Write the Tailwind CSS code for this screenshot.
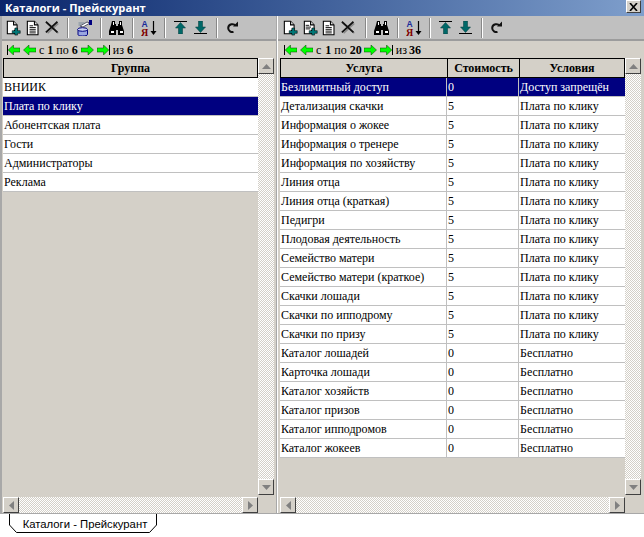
<!DOCTYPE html>
<html>
<head>
    <meta charset="utf-8">
    <title>Каталоги - Прейскурант</title>
    <script src="https://cdn.jsdelivr.net/npm/@tailwindcss/browser@4"></script>
</head>
<body class="w-[644px] h-[537px] overflow-hidden bg-white font-['Liberation_Serif',serif] text-[12px] text-black">

    <!-- icons -->
    <svg class="hidden">
        <symbol id="i-new" viewBox="0 -1 18 18">
            <path d="M1.500.5h7l4 4v6h-3v4h-8z" fill="#fff" stroke="#000" stroke-width="1.200"/>
            <path d="M8.500.5v4h4" fill="#ddd" stroke="#000" stroke-width="1.200"/>
            <path d="M10 8h3v3h3v3h-3v2h-3v-2H7v-3h3z" fill="#007878" stroke="#000" stroke-width=".6"/>
        </symbol>
        <symbol id="i-copy" viewBox="0 -1 18 18">
            <path d="M1.500.5h7l4 4v6h-3v4h-8z" fill="#fff" stroke="#000" stroke-width="1.200"/>
            <path d="M8.500.5v4h4" fill="#ddd" stroke="#000" stroke-width="1.200"/>
            <path d="M3 5h4M3 7h6M3 9h5" stroke="#000"/>
            <path d="M10 8h3v3h3v3h-3v2h-3v-2H7v-3h3z" fill="#007878" stroke="#000" stroke-width=".6"/>
        </symbol>
        <symbol id="i-doc" viewBox="0 -1 18 18">
            <path d="M1.500.5h8l4 4v11h-12z" fill="#fff" stroke="#000" stroke-width="1.200"/>
            <path d="M9.500.5v4h4" fill="#ddd" stroke="#000" stroke-width="1.200"/>
            <path d="M4 5.500h4M4 7.500h7M4 9.500h7M4 11.500h7M4 13.500h7" stroke="#000"/>
        </symbol>
        <symbol id="i-del" viewBox="0 -1 18 18">
            <path d="M3 3l12 11M15 3L3 14" stroke="#888" stroke-width="1.600" fill="none"/>
            <path d="M1 1l13 12M14 1L1 13" stroke="#111" stroke-width="2" fill="none"/>
        </symbol>
        <symbol id="i-cat" viewBox="0 0 16 16">
            <path d="M1 10v4.500c0 1 2 1.500 4.500 1.500s5-.5 5-1.500V10" fill="#9aa6e0" stroke="#000080"/>
            <ellipse cx="5.500" cy="9.500" rx="5" ry="1.800" fill="#c8d0f0" stroke="#000080"/>
            <path d="M3 6l7-4 3 1-7 4z" fill="#fff" stroke="#556"/>
            <path d="M1.500 3h6M1.500 5h3" stroke="#789" fill="none"/>
            <path d="M12 0h3v5h-3z" fill="#000080"/>
        </symbol>
        <symbol id="i-find" viewBox="0 0 16 16">
            <path d="M3 1h3v3h1v2h2V4h1V1h3v4l2 6v4h-6v-5H7v5H0v-4l2-6z" fill="#000"/>
            <path d="M2 11h3v2H2zM11 11h3v2h-3zM4 2h1v3H4zM11 2h1v3h-1z" fill="#fff"/>
        </symbol>
        <symbol id="i-sort" viewBox="0 0 16 16">
            <text x="0.500" y="7" font-family="Liberation Sans, sans-serif" font-size="8.500" font-weight="700" fill="#1a2a9a">A</text>
            <text x="0" y="15.500" font-family="Liberation Serif, serif" font-size="10" font-weight="700" fill="#800000">Я</text>
            <path d="M12.500 1v12" stroke="#000" stroke-width="1.200"/>
            <path d="M9.500 11h6l-3 4z" fill="#000"/>
        </symbol>
        <symbol id="i-up" viewBox="0 0 13 13">
            <path d="M0 .5h13" stroke="#000"/>
            <path d="M6.500 1.500L11.500 7H8.500V13H4.500V7H1.500z" fill="#006868" stroke="#003838" stroke-width=".5"/>
        </symbol>
        <symbol id="i-down" viewBox="0 0 13 13">
            <path d="M0 12.500h13" stroke="#000"/>
            <path d="M6.500 11.500L11.500 6H8.500V0H4.500V6H1.500z" fill="#006868" stroke="#003838" stroke-width=".5"/>
        </symbol>
        <symbol id="i-redo" viewBox="0 0 13 13">
            <path d="M9.500 4.500C8 2.500 2.500 2.500 2.200 7c0 3 3 4.500 5.300 4" fill="none" stroke="#111" stroke-width="2"/>
            <path d="M7 5.500h5V.5z" fill="#111"/>
        </symbol>
        <symbol id="i-first" viewBox="0 0 13 10">
            <path d="M1.200 5L6.500 0V3h6.500v4H6.500v3z" fill="#00ff00" stroke="#004000" stroke-width=".5"/>
            <path d="M.5 0v10" stroke="#000"/>
        </symbol>
        <symbol id="i-prev" viewBox="0 0 13 10">
            <path d="M.5 5L6 0V3h7v4H6v3z" fill="#00ff00" stroke="#004000" stroke-width=".5"/>
        </symbol>
        <symbol id="i-next" viewBox="0 0 13 10">
            <path d="M12.500 5L7 0V3H0v4h7v3z" fill="#00ff00" stroke="#004000" stroke-width=".5"/>
        </symbol>
        <symbol id="i-last" viewBox="0 0 13 10">
            <path d="M11.800 5L6.500 0V3H0v4h6.500v3z" fill="#00ff00" stroke="#004000" stroke-width=".5"/>
            <path d="M12.500 0v10" stroke="#000"/>
        </symbol>
        <symbol id="i-sup" viewBox="0 0 9 5"><path d="M4.500 0L9 5H0z" fill="#808080"/></symbol>
        <symbol id="i-sdn" viewBox="0 0 9 5"><path d="M4.500 5L9 0H0z" fill="#808080"/></symbol>
        <symbol id="i-slt" viewBox="0 0 5 9"><path d="M0 4.500L5 0v9z" fill="#808080"/></symbol>
        <symbol id="i-srt" viewBox="0 0 5 9"><path d="M5 4.500L0 0v9z" fill="#808080"/></symbol>
    </svg>

    <!-- title bar -->
    <div class="h-4 flex items-center justify-between pl-[5px] pr-[3px] bg-gradient-to-r from-[#0a246a] to-[#7f9fcc]">
        <span class="font-['Open_Sans',sans-serif] font-bold text-[11.2px] leading-4 text-white">Каталоги - Прейскурант</span>
        <span class="w-[15px] h-[13px] -mt-[3px] flex items-center justify-center bg-[#d4d0c8] border border-[#fff] border-r-[#404040] border-b-[#404040]">
            <svg class="w-[9px] h-[8px]" viewBox="0 0 9 8"><path d="M1 0l7 8M8 0L1 8" stroke="#000" stroke-width="1.600" fill="none"/></svg>
        </span>
    </div>

    <!-- panes -->
    <div class="flex h-[497px] bg-[#d4d0c8]">

        <!-- left pane -->
        <div class="w-[276px] flex flex-col border-l-2 border-[#a8a8a8]">
            <div class="h-[25px] flex items-center pl-[4px] bg-[#c0c0c0] border-b-2 border-[#9c9c9c]">
                <svg class="w-4 h-4 mr-[4px]"><use href="#i-new"/></svg>
                <svg class="w-4 h-4 mr-[3px]"><use href="#i-doc"/></svg>
                <svg class="w-4 h-4 mr-[6px]"><use href="#i-del"/></svg>
                <div class="w-[2px] h-5 mr-[8px] border-l border-[#888] border-r border-r-white"></div>
                <svg class="w-4 h-4 mr-[7px]"><use href="#i-cat"/></svg>
                <div class="w-[2px] h-5 mr-[7px] border-l border-[#888] border-r border-r-white"></div>
                <svg class="w-4 h-4 mr-[7px]"><use href="#i-find"/></svg>
                <div class="w-[2px] h-5 mr-[7px] border-l border-[#888] border-r border-r-white"></div>
                <svg class="w-4 h-4 mr-[7px]"><use href="#i-sort"/></svg>
                <div class="w-[2px] h-5 mr-[8px] border-l border-[#888] border-r border-r-white"></div>
                <svg class="w-[13px] h-[13px] mr-[7px]"><use href="#i-up"/></svg>
                <svg class="w-[13px] h-[13px] mr-[9px]"><use href="#i-down"/></svg>
                <div class="w-[2px] h-5 mr-[8px] border-l border-[#888] border-r border-r-white"></div>
                <svg class="w-[13px] h-[13px]"><use href="#i-redo"/></svg>
            </div>
            <div class="h-[17px] flex items-center pl-[5px]">
                <svg class="w-[13px] h-[10px] mr-[3px]"><use href="#i-first"/></svg>
                <svg class="w-[13px] h-[10px] mr-[3px]"><use href="#i-prev"/></svg>
                <span class="mr-[3px]">с</span><b class="mr-[3px]">1</b><span class="mr-[3px]">по</span><b class="mr-[3px]">6</b>
                <svg class="w-[13px] h-[10px] mr-[3px]"><use href="#i-next"/></svg>
                <svg class="w-[13px] h-[10px] mr-[3px]"><use href="#i-last"/></svg>
                <span class="mr-[3px]">из</span><b>6</b>
            </div>
            <div class="flex-1 flex min-h-0 pl-px">
                <div class="w-[255px] flex flex-col">
                    <div class="flex-1 min-h-0">
                        <div class="h-5 flex items-center justify-center bg-[#d4d0c8] border border-black font-bold">Группа</div>
                        <div id="leftRows"></div>
                    </div>
                    <div class="h-4 flex bg-[conic-gradient(#d4d0c8_25%,#fff_0_50%,#d4d0c8_0_75%,#fff_0)] bg-[length:2px_2px] justify-between">
                        <span class="w-[16px] h-4 flex items-center justify-center bg-[#d4d0c8] border border-[#fff] border-r-[#404040] border-b-[#404040]"><svg class="w-[5px] h-[9px]"><use href="#i-slt"/></svg></span>
                        <span class="w-[16px] h-4 flex items-center justify-center bg-[#d4d0c8] border border-[#fff] border-r-[#404040] border-b-[#404040]"><svg class="w-[5px] h-[9px]"><use href="#i-srt"/></svg></span>
                    </div>
                </div>
                <div class="w-[16px] h-[437px] flex flex-col justify-between bg-[conic-gradient(#d4d0c8_25%,#fff_0_50%,#d4d0c8_0_75%,#fff_0)] bg-[length:2px_2px]">
                    <span class="h-[16px] flex items-center justify-center bg-[#d4d0c8] border border-[#fff] border-r-[#404040] border-b-[#404040]"><svg class="w-[9px] h-[5px]"><use href="#i-sup"/></svg></span>
                    <span class="h-[16px] flex items-center justify-center bg-[#d4d0c8] border border-[#fff] border-r-[#404040] border-b-[#404040]"><svg class="w-[9px] h-[5px]"><use href="#i-sdn"/></svg></span>
                </div>
            </div>
        </div>

        <div class="w-[2px] bg-[#a8a8a8] border-r border-white"></div>

        <!-- right pane -->
        <div class="flex-1 flex flex-col">
            <div class="h-[25px] flex items-center pl-[5px] bg-[#c0c0c0] border-b-2 border-[#9c9c9c]">
                <svg class="w-4 h-4 mr-[4px]"><use href="#i-new"/></svg>
                <svg class="w-4 h-4 mr-[3px]"><use href="#i-copy"/></svg>
                <svg class="w-4 h-4 mr-[3px]"><use href="#i-doc"/></svg>
                <svg class="w-4 h-4 mr-[8px]"><use href="#i-del"/></svg>
                <div class="w-[2px] h-5 mr-[7px] border-l border-[#888] border-r border-r-white"></div>
                <svg class="w-4 h-4 mr-[7px]"><use href="#i-find"/></svg>
                <div class="w-[2px] h-5 mr-[7px] border-l border-[#888] border-r border-r-white"></div>
                <svg class="w-4 h-4 mr-[7px]"><use href="#i-sort"/></svg>
                <div class="w-[2px] h-5 mr-[8px] border-l border-[#888] border-r border-r-white"></div>
                <svg class="w-[13px] h-[13px] mr-[7px]"><use href="#i-up"/></svg>
                <svg class="w-[13px] h-[13px] mr-[9px]"><use href="#i-down"/></svg>
                <div class="w-[2px] h-5 mr-[7px] border-l border-[#888] border-r border-r-white"></div>
                <svg class="w-[13px] h-[13px]"><use href="#i-redo"/></svg>
            </div>
            <div class="h-[17px] flex items-center pl-[6px]">
                <svg class="w-[13px] h-[10px] mr-[3px]"><use href="#i-first"/></svg>
                <svg class="w-[13px] h-[10px] mr-[3px]"><use href="#i-prev"/></svg>
                <span class="mr-[4px]">с</span><b class="mr-[3px]">1</b><span class="mr-[3px]">по</span><b class="mr-[2px]">20</b>
                <svg class="w-[13px] h-[10px] mr-[3px]"><use href="#i-next"/></svg>
                <svg class="w-[13px] h-[10px] mr-[3px]"><use href="#i-last"/></svg>
                <span class="mr-[2px]">из</span><b>36</b>
            </div>
            <div class="flex-1 flex min-h-0 pl-[2px]">
                <div class="w-[345px] flex flex-col">
                    <div class="flex-1 min-h-0">
                        <div class="h-5 grid grid-cols-[167px_72px_1fr] bg-[#d4d0c8] border border-black font-bold text-center">
                            <div class="border-r border-black leading-[18px]">Услуга</div>
                            <div class="border-r border-black leading-[18px]">Стоимость</div>
                            <div class="leading-[18px]">Условия</div>
                        </div>
                        <div id="rightRows"></div>
                    </div>
                    <div class="h-4 flex bg-[conic-gradient(#d4d0c8_25%,#fff_0_50%,#d4d0c8_0_75%,#fff_0)] bg-[length:2px_2px] justify-between">
                        <span class="w-[16px] h-4 flex items-center justify-center bg-[#d4d0c8] border border-[#fff] border-r-[#404040] border-b-[#404040]"><svg class="w-[5px] h-[9px]"><use href="#i-slt"/></svg></span>
                        <span class="w-[16px] h-4 flex items-center justify-center bg-[#d4d0c8] border border-[#fff] border-r-[#404040] border-b-[#404040]"><svg class="w-[5px] h-[9px]"><use href="#i-srt"/></svg></span>
                    </div>
                </div>
                <div class="w-[16px] h-[437px] flex flex-col justify-between bg-[conic-gradient(#d4d0c8_25%,#fff_0_50%,#d4d0c8_0_75%,#fff_0)] bg-[length:2px_2px]">
                    <span class="h-[16px] flex items-center justify-center bg-[#d4d0c8] border border-[#fff] border-r-[#404040] border-b-[#404040]"><svg class="w-[9px] h-[5px]"><use href="#i-sup"/></svg></span>
                    <span class="h-[16px] flex items-center justify-center bg-[#d4d0c8] border border-[#fff] border-r-[#404040] border-b-[#404040]"><svg class="w-[9px] h-[5px]"><use href="#i-sdn"/></svg></span>
                </div>
            </div>
        </div>
    </div>

    <!-- tab strip -->
    <div class="border-t border-[#a8a8a8] pl-[9px]">
        <div class="relative w-[148px] h-5 flex items-center justify-center pl-[4px] font-['Liberation_Sans',sans-serif] text-[11.3px]">
            <svg class="absolute inset-0 w-[148px] h-5" viewBox="0 0 148 20"><path d="M.5 0v11l7 7.500h133l7-7.500V0" fill="#fff" stroke="#000"/></svg>
            <span class="relative">Каталоги - Прейскурант</span>
        </div>
    </div>

    <script>
        let groups = ["ВНИИК", "Плата по клику", "Абонентская плата", "Гости", "Администраторы", "Реклама"];
        let prices = [
            ["Безлимитный доступ", "0", "Доступ запрещён"],
            ["Детализация скачки", "5", "Плата по клику"],
            ["Информация о жокее", "5", "Плата по клику"],
            ["Информация о тренере", "5", "Плата по клику"],
            ["Информация по хозяйству", "5", "Плата по клику"],
            ["Линия отца", "5", "Плата по клику"],
            ["Линия отца (краткая)", "5", "Плата по клику"],
            ["Педигри", "5", "Плата по клику"],
            ["Плодовая деятельность", "5", "Плата по клику"],
            ["Семейство матери", "5", "Плата по клику"],
            ["Семейство матери (краткое)", "5", "Плата по клику"],
            ["Скачки лошади", "5", "Плата по клику"],
            ["Скачки по ипподрому", "5", "Плата по клику"],
            ["Скачки по призу", "5", "Плата по клику"],
            ["Каталог лошадей", "0", "Бесплатно"],
            ["Карточка лошади", "0", "Бесплатно"],
            ["Каталог хозяйств", "0", "Бесплатно"],
            ["Каталог призов", "0", "Бесплатно"],
            ["Каталог ипподромов", "0", "Бесплатно"],
            ["Каталог жокеев", "0", "Бесплатно"]
        ];

        let leftRows = document.getElementById("leftRows");
        groups.forEach((name, i) => {
            let row = document.createElement("div");
            row.className = i == 1
                ? "h-[19px] pl-[1px] leading-[18px] bg-[#000080] text-white border-b border-[#c0c0c0]"
                : "h-[19px] pl-[1px] leading-[18px] bg-white border-b border-[#c0c0c0]";
            row.textContent = name;
            leftRows.appendChild(row);
        });

        let rightRows = document.getElementById("rightRows");
        prices.forEach((cols, i) => {
            let row = document.createElement("div");
            row.className = i == 0
                ? "h-[19px] grid grid-cols-[167px_72px_1fr] leading-[18px] bg-[#000080] text-white border-b border-[#c0c0c0]"
                : "h-[19px] grid grid-cols-[167px_72px_1fr] leading-[18px] bg-white border-b border-[#c0c0c0]";
            cols.forEach((text, j) => {
                let cell = document.createElement("div");
                cell.className = j < 2 ? "pl-[1px] border-r border-[#c0c0c0] whitespace-nowrap" : "pl-[1px] whitespace-nowrap";
                cell.textContent = text;
                row.appendChild(cell);
            });
            rightRows.appendChild(row);
        });
    </script>
</body>
</html>
